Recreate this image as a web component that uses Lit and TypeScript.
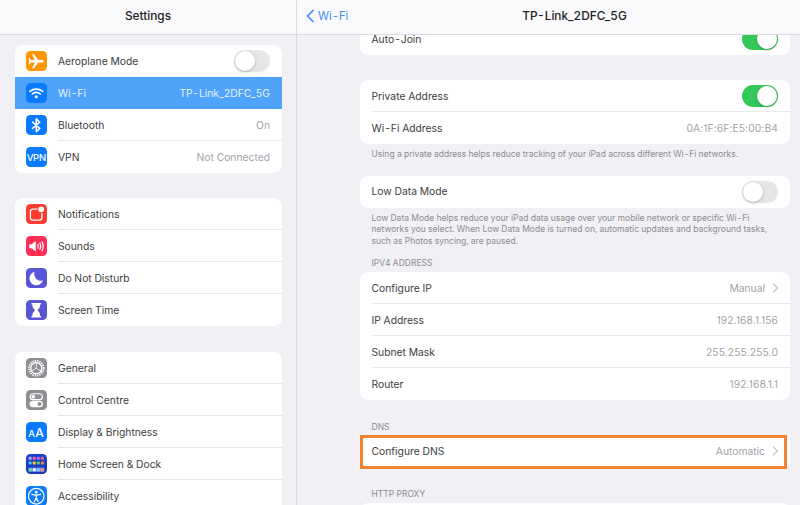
import { LitElement, html, css } from "lit";
import { customElement } from "lit/decorators.js";

const icons: Record<string, unknown> = {
  plane: html`<svg viewBox="0 0 20 20"><path fill="#fff" d="M3 10c0-.7.8-1.2 2-1.2h3.6L5.900 3.200h1.900l4.300 5.600h3.300c1 0 1.900.5 1.900 1.200s-.9 1.200-1.900 1.200h-3.300l-4.300 5.600H5.900l2.700-5.600H5c-1.200 0-2-.5-2-1.200z" /><path fill="#fff" d="M2.400 6.800h1.100l1.500 2.600v1.200l-1.500 2.600H2.400l.9-3.200z"/></svg>`,
  wifi: html`<svg viewBox="0 0 20 20" fill="none" stroke="#fff" stroke-width="1.6" stroke-linecap="round"><path d="M3.800 8.200c3.600-3 8.800-3 12.400 0" /><path d="M6.200 10.700c2.300-1.900 5.300-1.900 7.600 0" /><circle cx="10" cy="13.400" r="1.500" fill="#fff" stroke="none" /></svg>`,
  bt: html`<svg viewBox="0 0 20 20" fill="none" stroke="#fff" stroke-width="1.5" stroke-linejoin="round" stroke-linecap="round"><path d="M6.400 6.900l7 6.200L10 16.200V3.800l3.400 3.100-7 6.200" /></svg>`,
  vpn: html`<span class="vpn">VPN</span>`,
  notif: html`<svg viewBox="0 0 20 20" fill="none"><path stroke="#fff" stroke-width="1.3" d="M11 5H6.500A2.200 2.200 0 0 0 4.300 7.200v6.300a2.200 2.200 0 0 0 2.200 2.200h6.800a2.200 2.200 0 0 0 2.200-2.200V9" /><circle cx="14.800" cy="5.200" r="2.800" fill="#fff" /></svg>`,
  sound: html`<svg viewBox="0 0 20 20" fill="none" stroke="#fff" stroke-linecap="round"><path fill="#fff" stroke="none" d="M3.200 8h2.300l4-3.200v10.400l-4-3.200H3.200z" /><path stroke-width="1.100" d="M11.500 8.200c.7 1.200.7 2.400 0 3.600" /><path stroke-width="1.100" d="M13.500 6.800c1.200 2.100 1.200 4.300 0 6.400" /><path stroke-width="1.100" d="M15.500 5.500c1.700 3 1.700 6 0 9" /></svg>`,
  moon: html`<svg viewBox="0 0 20 20"><path fill="#fff" d="M8.300 3.700a6.700 6.700 0 1 0 8.200 8.600 6.800 6.800 0 0 1-8.200-8.600z" /></svg>`,
  hour: html`<svg viewBox="0 0 20 20" fill="#fff"><path d="M5.300 3h9.400v1.500h-1v1.300c0 1.700-1.600 3-2.500 4.200.9 1.200 2.500 2.500 2.500 4.200v1.300h1V17H5.300v-1.500h1v-1.300c0-1.700 1.600-3 2.500-4.200-.9-1.200-2.500-2.500-2.500-4.200V4.500h-1z" /></svg>`,
  gear: html`<svg viewBox="0 0 20 20" fill="none" stroke="#fff"><circle cx="10" cy="10" r="7.200" stroke-width="1.800" stroke-dasharray="1.300 1" /><circle cx="10" cy="10" r="5.400" stroke-width="1.300" /><path stroke-width=".8" d="M10 10V5M10 10l-4.300 2.500M10 10l4.300 2.500" /></svg>`,
  ctrl: html`<svg viewBox="0 0 20 20"><rect x="4" y="3.600" width="12" height="5.800" rx="2.900" fill="none" stroke="#fff" stroke-width="1.100" /><circle cx="7.100" cy="6.500" r="1.800" fill="#fff" /><rect x="3.500" y="10.400" width="13" height="6.400" rx="3.200" fill="#fff" /><circle cx="13.200" cy="13.600" r="2" fill="#8e8e93" /></svg>`,
  aa: html`<span class="aa"><span class="aa-s">A</span>A</span>`,
  home: html`<svg viewBox="0 0 20 20"><rect x="2.500" y="2.800" width="3" height="2.800" rx=".6" fill="#a9b4ee" /><rect x="6.500" y="2.800" width="3" height="2.800" rx=".6" fill="#e85ca8" /><rect x="10.500" y="2.800" width="3" height="2.800" rx=".6" fill="#b06be8" /><rect x="14.500" y="2.800" width="3" height="2.800" rx=".6" fill="#e8627a" /><rect x="2.500" y="7.400" width="3" height="2.800" rx=".6" fill="#4fc3f7" /><rect x="6.500" y="7.400" width="3" height="2.800" rx=".6" fill="#f7c331" /><rect x="10.500" y="7.400" width="3" height="2.800" rx=".6" fill="#4cd964" /><rect x="14.500" y="7.400" width="3" height="2.800" rx=".6" fill="#ff7a45" /><rect x="2" y="13.200" width="16" height="4.300" rx="1.200" fill="#5c7cf0" /><rect x="2.800" y="14" width="3" height="2.800" rx=".6" fill="#5ee08a" /><rect x="6.600" y="14" width="3" height="2.800" rx=".6" fill="#f4f6ff" /><rect x="10.400" y="14" width="3" height="2.800" rx=".6" fill="#7fd4ff" /><rect x="14.200" y="14" width="3" height="2.800" rx=".6" fill="#ff9a5c" /></svg>`,
  access: html`<svg viewBox="0 0 20 20" fill="none" stroke="#fff"><circle cx="10" cy="10" r="7.600" stroke-width="1.200" /><circle cx="10" cy="6" r="1.300" fill="#fff" stroke="none" /><path stroke-width="1.300" stroke-linecap="round" stroke-linejoin="round" d="M5.800 8.100c2.800.8 5.600.8 8.400 0M10 8.600v2.900M10 11.500l-1.800 3.700M10 11.500l1.800 3.700" /></svg>`,
};

type SideRow = { label: string; icon: string; bg: string; value?: string; toggle?: boolean; active?: boolean; noDivider?: boolean };

const groups: SideRow[][] = [
  [
    { label: "Aeroplane Mode", icon: "plane", bg: "orange", toggle: true, noDivider: true },
    { label: "Wi-Fi", icon: "wifi", bg: "blue", value: "TP-Link_2DFC_5G", active: true, noDivider: true },
    { label: "Bluetooth", icon: "bt", bg: "blue", value: "On" },
    { label: "VPN", icon: "vpn", bg: "blue", value: "Not Connected" },
  ],
  [
    { label: "Notifications", icon: "notif", bg: "red" },
    { label: "Sounds", icon: "sound", bg: "pink" },
    { label: "Do Not Disturb", icon: "moon", bg: "indigo" },
    { label: "Screen Time", icon: "hour", bg: "indigo" },
  ],
  [
    { label: "General", icon: "gear", bg: "grey" },
    { label: "Control Centre", icon: "ctrl", bg: "grey" },
    { label: "Display & Brightness", icon: "aa", bg: "blue" },
    { label: "Home Screen & Dock", icon: "home", bg: "navy" },
    { label: "Accessibility", icon: "access", bg: "blue" },
  ],
];

const chevron = html`<svg class="chev" viewBox="0 0 6 10" fill="none" stroke="#c4c4c8" stroke-width="1.100" stroke-linecap="round" stroke-linejoin="round"><path d="M1.300 1l4.200 4-4.200 4" /></svg>`;

@customElement("app-root")
export class AppRoot extends LitElement {
  static styles = css`
    :host {
      display: flex;
      width: 800px;
      height: 505px;
      overflow: hidden;
      background: #f0f0f5;
      font-family: Inter, "Liberation Sans", sans-serif;
      font-size: 10.300px;
      font-variant-numeric: tabular-nums;
      color: #3d3d40;
    }
    .side {
      width: 296px;
      flex: none;
      border-right: 1px solid #dcdce0;
      overflow: hidden;
    }
    .main {
      flex: 1;
      min-width: 0;
      overflow: hidden;
    }
    .bar {
      height: 34px;
      background: #f9f9fb;
      border-bottom: 1px solid #dcdce0;
      display: flex;
      align-items: center;
    }
    .bar-title {
      flex: 1;
      text-align: center;
      font-size: 11.800px;
      font-weight: 500;
      color: #222;
      padding-bottom: 2px;
    }
    .back {
      width: 52px;
      flex: none;
      display: flex;
      align-items: center;
      gap: 4px;
      padding-left: 9px;
      padding-bottom: 3px;
      box-sizing: border-box;
      color: #3f8cf8;
      font-size: 11.200px;
      white-space: nowrap;
    }
    .back svg {
      width: 8px;
      height: 14px;
      flex: none;
    }
    .side-groups {
      padding: 10px 14px 0 14.500px;
      display: flex;
      flex-direction: column;
      gap: 25px;
    }
    .group {
      background: #fff;
      border-radius: 8px;
      overflow: hidden;
    }
    .group:last-child {
      margin-top: 1px;
    }
    .srow {
      height: 32px;
      display: flex;
      align-items: center;
      padding-left: 11.500px;
      gap: 11.500px;
    }
    .srow.active {
      background: #4fa3fb;
      color: #e8f2ff;
    }
    .srow.active .val {
      color: #e8f2ff;
    }
    .ic {
      width: 20.500px;
      height: 20.500px;
      border-radius: 4.500px;
      flex: none;
      display: flex;
      align-items: center;
      justify-content: center;
      color: #fff;
      overflow: hidden;
    }
    .ic svg {
      width: 100%;
      height: 100%;
      display: block;
    }
    .orange { background: #ff9500; }
    .blue { background: #0a7aff; }
    .red { background: #ff3b30; }
    .pink { background: #ff2d55; }
    .indigo { background: #5856d6; }
    .grey { background: #8e8e93; }
    .navy { background: linear-gradient(#1a3fd0, #1c36b8); }
    .vpn {
      font-size: 9.500px;
      font-weight: 500;
      letter-spacing: -0.300px;
    }
    .aa {
      font-size: 12px;
      font-weight: 500;
      letter-spacing: 0.300px;
    }
    .aa-s {
      font-size: 9.500px;
    }
    .sbody {
      flex: 1;
      min-width: 0;
      height: 100%;
      display: flex;
      align-items: center;
      justify-content: space-between;
      padding-right: 12px;
      box-shadow: inset 0 -1px 0 #e6e6e9;
    }
    .srow:last-child .sbody,
    .sbody.plain {
      box-shadow: none;
    }
    .val {
      color: #a3a3a8;
      display: flex;
      align-items: center;
      gap: 7px;
      white-space: nowrap;
    }
    .val.addr {
      font-variant-numeric: normal;
      font-feature-settings: "cv01";
      letter-spacing: 0.100px;
    }
    .toggle {
      width: 36px;
      height: 22px;
      border-radius: 11px;
      background: #e6e6e8;
      position: relative;
      flex: none;
    }
    .toggle.on {
      background: #34c759;
    }
    .knob {
      position: absolute;
      top: 1px;
      left: 1px;
      width: 20px;
      height: 20px;
      border-radius: 50%;
      background: #fff;
      box-shadow: 0 1px 3px rgba(0, 0, 0, 0.25);
    }
    .on .knob {
      left: 15px;
    }
    .content {
      padding: 0 10px 0 63px;
      display: flex;
      flex-direction: column;
    }
    .card {
      background: #fff;
      border-radius: 8px;
    }
    .card.clip {
      height: 20px;
      overflow: hidden;
      display: flex;
      flex-direction: column;
      justify-content: flex-end;
      border-radius: 0 0 8px 8px;
      margin-bottom: 25px;
    }
    .row {
      height: 32px;
      flex: none;
      margin-left: 11.500px;
      padding-right: 12px;
      display: flex;
      align-items: center;
      justify-content: space-between;
      box-shadow: inset 0 -1px 0 #e9e9ec;
      line-height: 1;
    }
    .row:last-child {
      box-shadow: none;
    }
    .note {
      font-size: 8.500px;
      line-height: 11.500px;
      color: #8d8d92;
      padding: 5px 12px 0 11.500px;
    }
    .cap {
      font-size: 8.500px;
      line-height: 11px;
      color: #8d8d92;
      padding: 0 0 3px 11.500px;
    }
    .chev {
      width: 6px;
      height: 10px;
      flex: none;
    }
    .dns {
      position: relative;
    }
    .mark {
      position: absolute;
      left: 0;
      right: 3px;
      top: -1px;
      height: 34px;
      box-sizing: border-box;
      border: 3px solid #f5822e;
    }
    .empty {
      height: 32px;
    }
    .gap-a { height: 15px; }
    .gap-b { height: 11px; }
    .gap-c { height: 21.500px; }
  `;

  private sideRow(r: SideRow) {
    return html`<div class="srow ${r.active ? "active" : ""}">
      <div class="ic ${r.bg}">${icons[r.icon]}</div>
      <div class="sbody ${r.noDivider ? "plain" : ""}">
        <span>${r.label}</span>
        ${r.toggle ? html`<div class="toggle"><div class="knob"></div></div>` : ""}
        ${r.value ? html`<span class="val">${r.value}</span>` : ""}
      </div>
    </div>`;
  }

  private row(label: string, value: string, more = false, addr = false) {
    return html`<div class="row">
      <span>${label}</span>
      <span class="val ${addr ? "addr" : ""}">${value}${more ? chevron : ""}</span>
    </div>`;
  }

  render() {
    const on = html`<div class="toggle on"><div class="knob"></div></div>`;
    const off = html`<div class="toggle"><div class="knob"></div></div>`;
    return html`
      <div class="side">
        <div class="bar"><div class="bar-title">Settings</div></div>
        <div class="side-groups">
          ${groups.map((g) => html`<div class="group">${g.map((r) => this.sideRow(r))}</div>`)}
        </div>
      </div>
      <div class="main">
        <div class="bar">
          <div class="back">
            <svg viewBox="0 0 8 14" fill="none" stroke="#3f8cf8" stroke-width="1.700" stroke-linecap="round" stroke-linejoin="round"><path d="M7 1.500L1.500 7 7 12.500" /></svg>
            <span>Wi-Fi</span>
          </div>
          <div class="bar-title">TP-Link_2DFC_5G</div>
        </div>
        <div class="content">
          <div class="card clip">
            <div class="row"><span>Auto-Join</span>${on}</div>
          </div>
          <div class="card">
            <div class="row"><span>Private Address</span>${on}</div>
            ${this.row("Wi-Fi Address", "0A:1F:6F:E5:00:B4", false, true)}
          </div>
          <div class="note">Using a private address helps reduce tracking of your iPad across different Wi-Fi networks.</div>
          <div class="gap-a"></div>
          <div class="card">
            <div class="row"><span>Low Data Mode</span>${off}</div>
          </div>
          <div class="note">Low Data Mode helps reduce your iPad data usage over your mobile network or specific Wi-Fi networks you select. When Low Data Mode is turned on, automatic updates and background tasks, such as Photos syncing, are paused.</div>
          <div class="gap-b"></div>
          <div class="cap">IPV4 ADDRESS</div>
          <div class="card">
            ${this.row("Configure IP", "Manual", true)}
            ${this.row("IP Address", "192.168.1.156", false, true)}
            ${this.row("Subnet Mask", "255.255.255.0", false, true)}
            ${this.row("Router", "192.168.1.1", false, true)}
          </div>
          <div class="gap-c"></div>
          <div class="cap">DNS</div>
          <div class="card dns">
            ${this.row("Configure DNS", "Automatic", true)}
            <div class="mark"></div>
          </div>
          <div class="gap-c"></div>
          <div class="cap">HTTP PROXY</div>
          <div class="card empty"></div>
        </div>
      </div>
    `;
  }
}
